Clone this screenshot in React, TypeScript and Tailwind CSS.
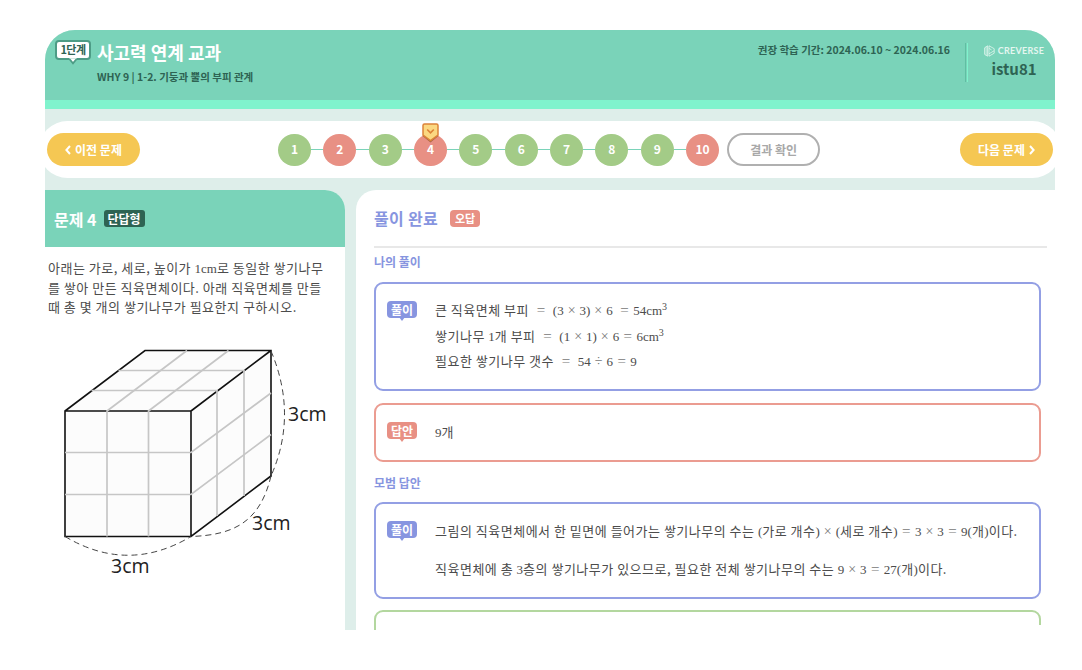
import { ReactNode } from "react";

type Tone = "indigo" | "coral" | "green";

type Step = {
  no: number;
  correct: boolean;
};

const steps: Step[] = [
  { no: 1, correct: true },
  { no: 2, correct: false },
  { no: 3, correct: true },
  { no: 4, correct: false },
  { no: 5, correct: true },
  { no: 6, correct: true },
  { no: 7, correct: true },
  { no: 8, correct: true },
  { no: 9, correct: true },
  { no: 10, correct: false },
];

const CURRENT = 4;

const boxTone: Record<Tone, string> = {
  indigo: "border-[#939fe4]",
  coral: "border-[#eb9c91]",
  green: "border-[#b3d79f]",
};

const labelTone: Record<Tone, string> = {
  indigo: "bg-[#8795e0]",
  coral: "bg-[#e89084]",
  green: "bg-[#a3cb87]",
};

const tailTone: Record<Tone, string> = {
  indigo: "border-t-[#8795e0]",
  coral: "border-t-[#e89084]",
  green: "border-t-[#a3cb87]",
};

const Chevron = ({ flip }: { flip?: boolean }) => (
  <svg
    width="6"
    height="10"
    viewBox="0 0 6 10"
    fill="none"
    stroke="currentColor"
    strokeWidth="2"
    className={flip ? "rotate-180" : ""}
  >
    <path d="M5 1 1.4 5 5 9" />
  </svg>
);

const Logo = () => (
  <svg width="11" height="12" viewBox="0 0 11 12" fill="none" stroke="#e4f6f0" strokeWidth="0.8">
    <path d="M.6 2.8 3.6.8v10.4L.6 9.4zM2.1 1.9v8.4" />
    <path d="M5 .8 10.2 3.7v2L5 8.8M5 3.4 7.6 4.9M10.2 5.7v2.5L5 11.2V.8" />
  </svg>
);

const Header = () => (
  <header className="flex h-[79px] shrink-0 border-b-[9px] border-[#80f3cd] bg-[#7ad3b9] text-[#2e6353]">
    <div className="flex pl-[10px] pt-[10px]">
      <div className="relative flex h-[20px] w-[36px] items-center justify-center rounded-[4px] border-2 border-[#4d9c86] bg-white pb-px text-[11px] font-bold tracking-[-0.5px]">
        1단계
        <svg className="absolute left-[11px] top-[15px]" width="10" height="8" viewBox="0 0 10 8">
          <path d="M1 1.500 5 6.400 9 1.500" fill="#fff" stroke="#4d9c86" strokeWidth="1.800" />
          <path d="M1.400 0h7.200v1.500H1.400z" fill="#fff" />
        </svg>
      </div>
      <div className="pl-[6px]">
        <h1 className="text-[18px] font-bold leading-[24px] text-white">사고력 연계 교과</h1>
        <p className="mt-[5px] text-[10.5px] font-bold leading-[16px]">WHY 9 | 1-2. 기둥과 뿔의 부피 관계</p>
      </div>
    </div>
    <div className="ml-auto flex">
      <p className="mt-[12px] text-[10.5px] font-bold leading-[16px]">
        권장 학습 기간: 2024.06.10 ~ 2024.06.16
      </p>
      <div className="ml-[15px] mt-[13px] h-[39px] w-[3px] border-l border-r border-l-[#5fbfa2] border-r-[#80f3cd]" />
      <div className="mt-[14px] flex w-[87px] flex-col items-center pl-[5px]">
        <div className="flex items-center gap-[3px]">
          <Logo />
          <span className="font-['Lato',sans-serif] text-[9px] font-bold leading-[14px] tracking-[0.3px] text-[#e4f6f0]">
            CREVERSE
          </span>
        </div>
        <span className="mt-px text-[15px] font-bold leading-[20px]">istu81</span>
      </div>
    </div>
  </header>
);

const StepNav = () => (
  <nav className="-mx-[6px] mt-[12px] flex h-[57px] shrink-0 items-center rounded-full bg-white px-[8px]">
    <button className="flex h-[33px] w-[93px] items-center justify-center gap-[4px] rounded-full bg-[#f5c753] text-[12px] font-bold text-white">
      <Chevron />
      이전 문제
    </button>
    <ol className="ml-[138px] flex items-center">
      {steps.map(({ no, correct }) => (
        <li key={no} className="flex items-center">
          {no > 1 && <span className="h-px w-[12.35px] bg-[#7ad3b9]" />}
          <span
            className={`relative flex h-[32px] w-[33px] items-center justify-center rounded-full pb-px text-[12px] font-bold text-white ${
              correct ? "bg-[#a3cb87]" : "bg-[#e89084]"
            }`}
          >
            {no}
            {no === CURRENT && (
              <svg className="absolute left-[8px] top-[-11px]" width="17" height="20" viewBox="0 0 17 20">
                <path d="M1 12.500 8.500 18.500 16 12.500" fill="none" stroke="#a8664a" strokeWidth="1.500" />
                <path
                  d="M2.500 1h12Q16 1 16 2.500V12L8.500 17.500 1 12V2.500Q1 1 2.500 1z"
                  fill="#fbd881"
                  stroke="#dc8338"
                  strokeWidth="1.500"
                />
                <path d="M5.200 6.500 8.500 9.800 11.800 6.500" fill="none" stroke="#dc8338" strokeWidth="1.600" />
              </svg>
            )}
          </span>
        </li>
      ))}
    </ol>
    <button className="ml-[8px] h-[33px] w-[93px] rounded-full border-2 border-[#b0b0b0] text-[12px] font-bold text-[#a8a8a8]">
      결과 확인
    </button>
    <button className="ml-auto flex h-[33px] w-[93px] items-center justify-center gap-[4px] rounded-full bg-[#f5c753] text-[12px] font-bold text-white">
      다음 문제
      <Chevron flip />
    </button>
  </nav>
);

// serif run inside a Korean sentence
const M = ({ children }: { children: ReactNode }) => (
  <span className="font-['Liberation_Serif',serif] tracking-normal">{children}</span>
);

const Eq = () => (
  <span className="inline-block w-[17.3px] text-center text-[15px] leading-none text-[#777]">=</span>
);

const Op = ({ children }: { children: ReactNode }) => (
  <span className="inline-block w-[15.8px] text-center text-[14px] leading-none text-[#777]">{children}</span>
);

const Cube = () => (
  <svg
    className="mt-[18px]"
    width="300"
    height="250"
    viewBox="45 335 300 250"
    fill="none"
  >
    <path d="M65 411 145 350.500H271V476L191 536.500H65z" fill="#fcfcfc" />
    <g stroke="#111" strokeWidth="1.600">
      <path d="M65 411 145 350.500H271V476L191 536.500H65zM65 411H191V536.500M191 411 271 350.500" />
    </g>
    <g stroke="#c6c6c6" strokeWidth="1.700">
      <path d="M107 536.500V411L187 350.500M148.500 536.500V411L228.500 350.500" />
      <path d="M65 452.500H191L271 393M65 494.500H191L271 434.500" />
      <path d="M91.500 390.500H217V516M118.500 370.500H244V496" />
    </g>
    <g stroke="#444" strokeWidth="1" strokeDasharray="6 4">
      <path d="M271 351Q298 415 271 476" />
      <path d="M271 476C260 522 234 535 191 536.500" />
      <path d="M65 536.500Q128 574 191 536.500" />
    </g>
    <g fill="#222" fontFamily="'Open Sans', sans-serif" fontSize="19.500">
      <text x="288" y="421" textLength="38.500">3cm</text>
      <text x="252" y="530" textLength="38.500">3cm</text>
      <text x="111" y="572.500" textLength="38.500">3cm</text>
    </g>
  </svg>
);

const ProblemPanel = () => (
  <section className="flex w-[300px] flex-col overflow-hidden rounded-tr-[20px] bg-white">
    <div className="flex h-[57px] items-center gap-[7px] bg-[#7ad3b9] pl-[9px]">
      <h2 className="text-[16px] font-bold text-white">문제 4</h2>
      <span className="flex h-[17px] w-[41px] items-center justify-center rounded-[3px] bg-[#2e6353] text-[12px] font-bold text-white">
        단답형
      </span>
    </div>
    <p className="whitespace-nowrap pl-[3px] pt-[11px] text-[13px] leading-[19.2px] tracking-[0.5px] text-[#4c4c4c]">
      아래는 가로, 세로, 높이가 <M>1cm</M>로 동일한 쌓기나무
      <br />
      를 쌓아 만든 직육면체이다. 아래 직육면체를 만들
      <br />
      때 총 몇 개의 쌓기나무가 필요한지 구하시오.
    </p>
    <Cube />
  </section>
);

type AnswerBoxProps = {
  tone: Tone;
  label: string;
  className: string;
  children?: ReactNode;
};

const AnswerBox = ({ tone, label, className, children }: AnswerBoxProps) => (
  <div className={`flex w-[667px] shrink-0 rounded-[9px] border-2 pl-[11px] pt-[17px] ${boxTone[tone]} ${className}`}>
    <span
      className={`relative flex h-[17px] w-[30px] items-center justify-center rounded-[4px] text-[12px] font-bold text-white ${labelTone[tone]}`}
    >
      {label}
      <i className={`absolute left-[12px] top-[16px] border-x-[3px] border-t-[4px] border-x-transparent ${tailTone[tone]}`} />
    </span>
    <div className="whitespace-nowrap pl-[18px] text-[13px] tracking-[0.5px] text-[#4c4c4c]">{children}</div>
  </div>
);

const SolutionPanel = () => (
  <section className="relative flex w-[699px] flex-col overflow-hidden rounded-tl-[20px] bg-white pl-[18px]">
    <div className="flex h-[58px] w-[673px] shrink-0 items-center gap-[12px] border-b-2 border-[#e8e8e8]">
      <h2 className="text-[16px] font-bold tracking-[0.3px] text-[#8795e0]">풀이 완료</h2>
      <span className="flex h-[17px] w-[30px] items-center justify-center rounded-[4px] bg-[#e89084] text-[11px] font-bold text-white">
        오답
      </span>
    </div>
    <h3 className="mt-[5px] text-[12px] font-bold leading-[18px] text-[#8795e0]">나의 풀이</h3>
    <AnswerBox tone="indigo" label="풀이" className="mt-[11px] h-[109px]">
      <div className="-mt-[4px] leading-[25.5px]">
        <p className="h-[25.5px]">
          큰 직육면체 부피
          <M>
            &nbsp;
            <Eq />
            &nbsp;(3
            <Op>×</Op>
            3)
            <Op>×</Op>6&nbsp;
            <Eq />
            54cm<sup className="text-[10px]">3</sup>
          </M>
        </p>
        <p className="h-[25.5px]">
          쌓기나무 <M>1</M>개 부피
          <M>
            &nbsp;
            <Eq />
            &nbsp;(1
            <Op>×</Op>
            1)
            <Op>×</Op>6<Eq />
            6cm<sup className="text-[10px]">3</sup>
          </M>
        </p>
        <p className="h-[25.5px]">
          필요한 쌓기나무 갯수
          <M>
            &nbsp;
            <Eq />
            &nbsp;54
            <Op>÷</Op>6<Eq />9
          </M>
        </p>
      </div>
    </AnswerBox>
    <AnswerBox tone="coral" label="답안" className="mt-[12px] h-[59px]">
      <p className="leading-[19px]">
        <M>9</M>개
      </p>
    </AnswerBox>
    <h3 className="mt-[12px] text-[12px] font-bold leading-[18px] text-[#8795e0]">모범 답안</h3>
    <AnswerBox tone="indigo" label="풀이" className="mt-[10px] h-[97px]">
      <div className="flex flex-col gap-[19px]">
        <p className="h-[19px] leading-[19px]">
          그림의 직육면체에서 한 밑면에 들어가는 쌓기나무의 수는 <M>(</M>가로 개수
          <M>
            )<Op>×</Op>(
          </M>
          세로 개수
          <M>
            )<Eq />3<Op>×</Op>3<Eq />
            9(
          </M>
          개<M>)</M>이다.
        </p>
        <p className="h-[19px] leading-[19px]">
          직육면체에 총 <M>3</M>층의 쌓기나무가 있으므로, 필요한 전체 쌓기나무의 수는{" "}
          <M>
            9<Op>×</Op>3<Eq />
            27(
          </M>
          개<M>)</M>이다.
        </p>
      </div>
    </AnswerBox>
    <div className={`mt-[11px] h-[40px] w-[667px] shrink-0 rounded-t-[9px] border-2 ${boxTone.green}`} />
    <span className="absolute bottom-0 right-0 h-[5px] w-[24px] bg-white" />
  </section>
);

export default function App() {
  return (
    <div className="h-[670px] w-[1082px] bg-white pl-[45px] pt-[30px] font-['Noto_Sans_CJK_KR',sans-serif]">
      <main className="flex h-[600px] w-[1010px] flex-col overflow-hidden rounded-t-[30px] bg-[#deeeea]">
        <Header />
        <StepNav />
        <div className="mt-[12px] flex min-h-0 flex-1 justify-between">
          <ProblemPanel />
          <SolutionPanel />
        </div>
      </main>
    </div>
  );
}
